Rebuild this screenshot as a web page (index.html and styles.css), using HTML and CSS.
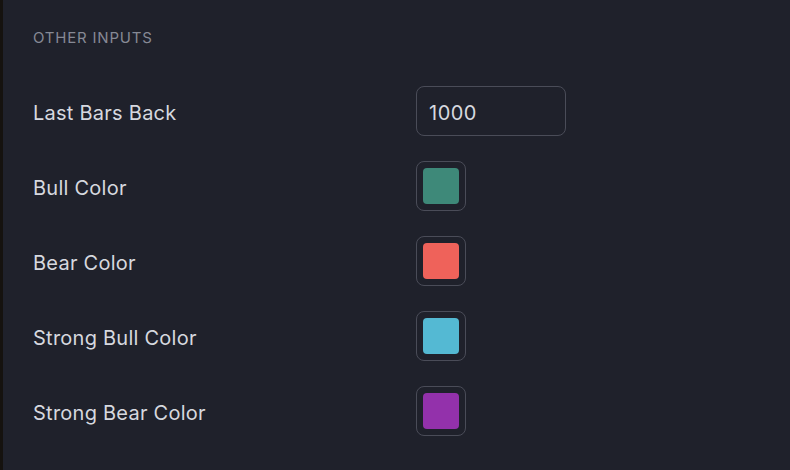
FILE: index.html
```html
<!DOCTYPE html>
<html lang="en">
<head>
  <meta charset="UTF-8">
  <title>Other Inputs</title>
  <link rel="stylesheet" href="styles.css">
</head>
<body>
  <div class="panel">
    <h3 class="section-title">OTHER INPUTS</h3>
    <div class="rows">
      <div class="row">
        <label class="row-label" for="bars-back">Last Bars Back</label>
        <input class="num-input" id="bars-back" type="text" value="1000">
      </div>
      <div class="row">
        <span class="row-label">Bull Color</span>
        <button class="swatch-btn"><span class="swatch bull"></span></button>
      </div>
      <div class="row">
        <span class="row-label">Bear Color</span>
        <button class="swatch-btn"><span class="swatch bear"></span></button>
      </div>
      <div class="row">
        <span class="row-label">Strong Bull Color</span>
        <button class="swatch-btn"><span class="swatch strong-bull"></span></button>
      </div>
      <div class="row">
        <span class="row-label">Strong Bear Color</span>
        <button class="swatch-btn"><span class="swatch strong-bear"></span></button>
      </div>
    </div>
  </div>
</body>
</html>
```
FILE: styles.css
```css
html, body {
  margin: 0;
  padding: 0;
  height: 100%;
  background-color: #1f212b;
}
body {
  font-family: 'Inter', 'Noto Sans', sans-serif;
  color: #d6d8df;
  border-left: 3px solid #15120f;
  box-sizing: border-box;
}
.panel {
  padding: 29px 30px 0 30px;
}
.section-title {
  margin: 0;
  font-size: 15px;
  font-weight: 400;
  line-height: 18px;
  letter-spacing: 0.8px;
  color: #868995;
}
.rows {
  margin-top: 39px;
  display: flex;
  flex-direction: column;
  gap: 25px;
}
.row {
  display: grid;
  grid-template-columns: 383px auto;
  align-items: center;
  height: 50px;
}
.row-label {
  font-size: 20px;
  line-height: 24px;
  letter-spacing: 0.25px;
  padding-top: 3px;
}
.num-input {
  width: 150px;
  height: 50px;
  box-sizing: border-box;
  padding: 3px 12px 0 12px;
  background: transparent;
  border: 1px solid #4a4c58;
  border-radius: 8px;
  font-family: inherit;
  font-size: 20px;
  letter-spacing: 0.5px;
  color: #d6d8df;
  outline: none;
}
.swatch-btn {
  width: 50px;
  height: 50px;
  box-sizing: border-box;
  padding: 0;
  background: transparent;
  border: 1px solid #4a4c58;
  border-radius: 8px;
  display: flex;
  align-items: center;
  justify-content: center;
  cursor: pointer;
}
.swatch {
  display: block;
  width: 36px;
  height: 36px;
  border-radius: 4px;
}
.bull { background-color: #3e8979; }
.bear { background-color: #ef625a; }
.strong-bull { background-color: #54b9d3; }
.strong-bear { background-color: #9331ab; }
```
